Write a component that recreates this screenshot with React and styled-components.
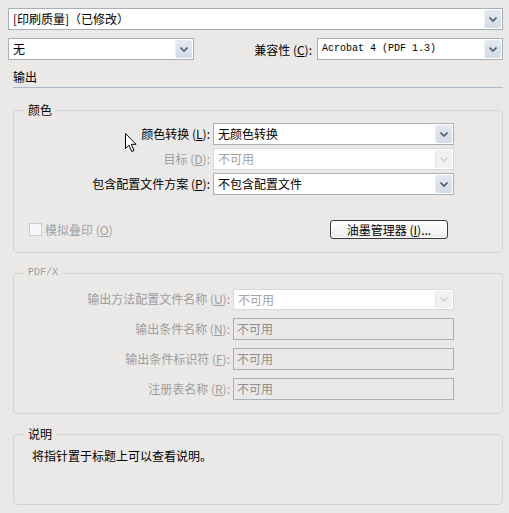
import React from 'react';
import styled, { createGlobalStyle } from 'styled-components';

const GlobalStyle = createGlobalStyle`
  html, body {
    margin: 0;
    padding: 0;
    background: #eae9e8;
  }
  body {
    font-family: "Noto Sans CJK SC", "Liberation Sans", sans-serif;
    font-size: 12px;
    color: #000;
  }
`;

const Page = styled.div`
  position: relative;
  width: 509px;
  height: 513px;
  box-sizing: border-box;
  padding: 8px 6px 0 8px;
  overflow: hidden;
`;

const Row = styled.div`
  display: flex;
  align-items: center;
  margin-top: ${p => p.$top || 0}px;
`;

const Spacer = styled.div`
  flex: 1;
`;

const SelectBox = styled.div`
  display: flex;
  width: ${p => p.$w}px;
  height: ${p => p.$h || 22}px;
  box-sizing: border-box;
  border: 1px solid ${p => (p.$disabled ? '#d9d9d8' : '#a7aeb6')};
  background: #fff;
`;

const SelectText = styled.span`
  flex: 1;
  padding-left: 4px;
  line-height: ${p => (p.$h || 22) - 2}px;
  white-space: nowrap;
  overflow: hidden;
  color: ${p => (p.$disabled ? '#a3a3a3' : '#000')};
  font-family: ${p => (p.$mono ? '"Liberation Mono", monospace' : 'inherit')};
  font-size: ${p => (p.$mono ? '10px' : '12px')};
`;

const ArrowButton = styled.span`
  width: 16px;
  margin: 1px;
  display: flex;
  align-items: center;
  justify-content: center;
  border-radius: 2px;
  background: ${p =>
    p.$disabled
      ? '#f1f1f0'
      : 'linear-gradient(#e4e9f1, #d3dbe6)'};
  border-left: 1px solid ${p => (p.$disabled ? '#e6e6e5' : '#ecf0f5')};
`;

const Chevron = ({ disabled }) => (
  <svg width="8" height="5" viewBox="0 0 8 5">
    <path
      d="M0.5 0.5 L4 4 L7.5 0.5"
      fill="none"
      stroke={disabled ? '#d0d3d6' : '#4f5b6b'}
      strokeWidth="1.6"
    />
  </svg>
);

function Select({ w, h, value, disabled, mono }) {
  return (
    <SelectBox $w={w} $h={h} $disabled={disabled}>
      <SelectText $h={h} $disabled={disabled} $mono={mono}>{value}</SelectText>
      <ArrowButton $disabled={disabled}>
        <Chevron disabled={disabled} />
      </ArrowButton>
    </SelectBox>
  );
}

const TextField = styled.div`
  width: ${p => p.$w}px;
  height: 22px;
  box-sizing: border-box;
  border: 1px solid #a9b0b7;
  padding-left: 3px;
  line-height: 20px;
  color: #8e8e8e;
`;

const Label = styled.span`
  color: ${p => (p.$disabled ? '#9d9d9d' : '#000')};
  white-space: nowrap;
  margin-right: ${p => p.$gap || 0}px;
`;

const Key = styled.span`
  text-decoration: underline;
`;

const Heading = styled.div`
  margin: 10px 0 0 5px;
  width: 490px;
  line-height: 14px;
  padding-bottom: 3px;
  border-bottom: 1px solid #a8b9cc;
`;

const Group = styled.fieldset`
  margin: ${p => p.$top}px 0 0 5px;
  padding: 0;
  width: 490px;
  box-sizing: border-box;
  min-width: 0;
  border: 1px solid #d3d3d2;
  border-radius: 4px;
`;

const Legend = styled.legend`
  margin-left: 10px;
  padding: 0 4px;
  line-height: 14px;
  color: ${p => (p.$disabled ? '#9d9d9d' : '#000')};
  font-family: ${p => (p.$mono ? '"Liberation Mono", monospace' : 'inherit')};
  font-size: ${p => (p.$mono ? '10px' : '12px')};
`;

const GroupBody = styled.div`
  padding: ${p => p.$pad};
  min-height: ${p => p.$min || 0}px;
`;

const FormGrid = styled.div`
  display: grid;
  grid-template-columns: ${p => p.$label}px ${p => p.$ctrl}px;
  column-gap: 3px;
  row-gap: ${p => p.$gap}px;
  align-items: center;
`;

const FieldLabel = styled.span`
  text-align: right;
  line-height: 22px;
  white-space: nowrap;
  color: ${p => (p.$disabled ? '#9d9d9d' : '#000')};
`;

const OptionRow = styled.div`
  display: flex;
  align-items: center;
  justify-content: space-between;
  margin-top: 25px;
  padding: 0 54px 0 15px;
`;

const CheckItem = styled.label`
  display: flex;
  align-items: center;
  gap: 3px;
  color: #a3a3a3;
`;

const CheckBox = styled.span`
  width: 11px;
  height: 11px;
  border: 1px solid #cbcbcb;
  background: #f7f7f7;
`;

const Button = styled.div`
  width: 118px;
  height: 19px;
  box-sizing: border-box;
  border: 1px solid #3a3a3a;
  border-radius: 3px;
  background: linear-gradient(#ffffff, #ececeb);
  box-shadow: inset 0 0 0 1px #fbfbfb;
  text-align: center;
  line-height: 17px;
`;

const Hint = styled.div`
  line-height: 14px;
`;

const Pointer = styled.svg`
  position: absolute;
  left: 125px;
  top: 133px;
`;

export default function App() {
  return (
    <>
      <GlobalStyle />
      <Page>
        <Select w={495} value="[印刷质量]（已修改）" />

        <Row $top={8}>
          <Select w={186} value="无" />
          <Spacer />
          <Label $gap={5}>兼容性 (<Key>C</Key>):</Label>
          <Select w={186} value="Acrobat 4 (PDF 1.3)" mono />
        </Row>

        <Heading>输出</Heading>

        <Group $top={15}>
          <Legend>颜色</Legend>
          <GroupBody $pad="6px 0 13px 0">
            <FormGrid $label={196} $ctrl={241} $gap={3}>
              <FieldLabel>颜色转换 (<Key>L</Key>):</FieldLabel>
              <Select w={241} value="无颜色转换" />
              <FieldLabel $disabled>目标 (<Key>D</Key>):</FieldLabel>
              <Select w={241} value="不可用" disabled />
              <FieldLabel>包含配置文件方案 (<Key>P</Key>):</FieldLabel>
              <Select w={241} value="不包含配置文件" />
            </FormGrid>
            <OptionRow>
              <CheckItem>
                <CheckBox />
                <span>模拟叠印 (<Key>O</Key>)</span>
              </CheckItem>
              <Button>油墨管理器 (<Key>I</Key>)...</Button>
            </OptionRow>
          </GroupBody>
        </Group>

        <Group $top={13}>
          <Legend $disabled $mono>PDF/X</Legend>
          <GroupBody $pad="8px 0 13px 0">
            <FormGrid $label={216} $ctrl={221} $gap={8}>
              <FieldLabel $disabled>输出方法配置文件名称 (<Key>U</Key>):</FieldLabel>
              <Select w={221} h={21} value="不可用" disabled />
              <FieldLabel $disabled>输出条件名称 (<Key>N</Key>):</FieldLabel>
              <TextField $w={221}>不可用</TextField>
              <FieldLabel $disabled>输出条件标识符 (<Key>F</Key>):</FieldLabel>
              <TextField $w={221}>不可用</TextField>
              <FieldLabel $disabled>注册表名称 (<Key>R</Key>):</FieldLabel>
              <TextField $w={221}>不可用</TextField>
            </FormGrid>
          </GroupBody>
        </Group>

        <Group $top={13}>
          <Legend>说明</Legend>
          <GroupBody $pad="8px 0 0 18px" $min={55}>
            <Hint>将指针置于标题上可以查看说明。</Hint>
          </GroupBody>
        </Group>

        <Pointer width="13" height="20" viewBox="0 0 13 20">
          <path
            d="M0.5 0.5 L0.5 15.5 L4 12.2 L6.8 18.5 L9 17.5 L6.3 11.3 L11 11.3 Z"
            fill="#fff"
            stroke="#000"
            strokeWidth="1"
            strokeLinejoin="miter"
          />
        </Pointer>
      </Page>
    </>
  );
}
